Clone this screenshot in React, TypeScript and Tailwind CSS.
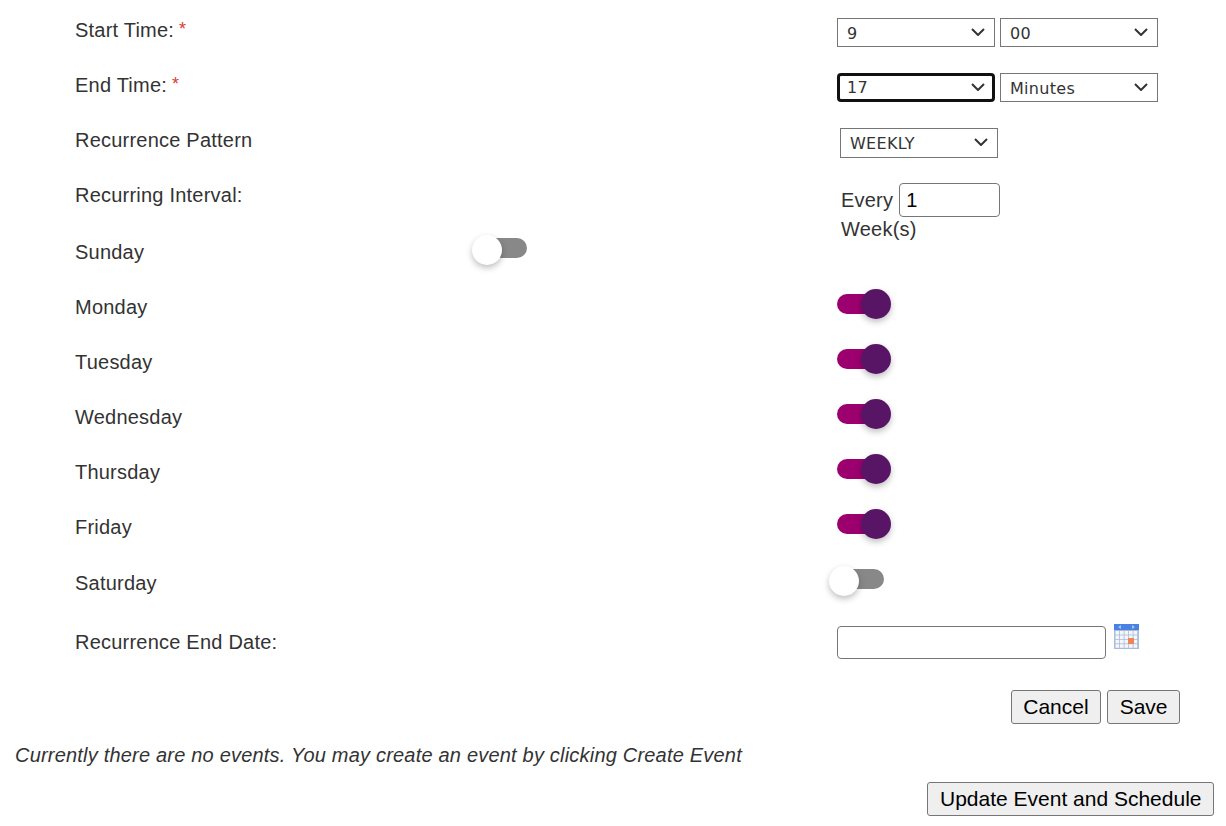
const days = ["Monday", "Tuesday", "Wednesday", "Thursday", "Friday"];

function Toggle({ on }: { on: boolean }) {
  if (on) {
    return (
      <div className="flex h-5 w-[50px] items-center justify-end rounded-full bg-[#9c006f]">
        <div className="-mr-1 h-[30px] w-[30px] shrink-0 rounded-full bg-[#581565] shadow-[0_3px_6px_rgba(0,0,0,0.25)]" />
      </div>
    );
  }
  return (
    <div className="flex h-5 w-[50px] items-center rounded-full bg-[#888888]">
      <div className="-ml-[5px] mt-1 h-[30px] w-[30px] shrink-0 rounded-full bg-white shadow-[0_3px_6px_rgba(0,0,0,0.25)]" />
    </div>
  );
}

function Required() {
  return <span className="ml-[5px] align-[2px] text-[18px] text-[#d8402f]">*</span>;
}

function Select({ value, options, focus, tall }: { value: string; options: string[]; focus?: boolean; tall?: boolean }) {
  return (
    <div className={tall ? "relative h-[30px] w-[158px]" : "relative h-[29px] w-[158px]"}>
      <select
        defaultValue={value}
        className={
          focus
            ? "h-full w-full appearance-none rounded-[4px] border-[3px] border-[#111111] pl-[7px] font-['DejaVu_Sans',sans-serif] text-[16px] tracking-[0.3px] text-[#333333]"
            : "h-full w-full appearance-none border border-[#767676] pt-[2px] pl-[9px] font-['DejaVu_Sans',sans-serif] text-[16px] tracking-[0.3px] text-[#333333]"
        }
      >
        {options.map((o) => (
          <option key={o}>{o}</option>
        ))}
      </select>
      <svg width="14" height="8" viewBox="0 0 14 8" className="pointer-events-none absolute top-[10px] right-[10px]">
        <path d="M1 1 7 7 13 1" fill="none" stroke="#333333" strokeWidth="2" />
      </svg>
    </div>
  );
}

function CalendarIcon() {
  const cells = [];
  for (let r = 0; r < 4; r++) {
    for (let c = 0; c < 5; c++) {
      cells.push(
        <rect key={`${r}-${c}`} x={1.5 + c * 4.5} y={7 + r * 4.4} width={3.7} height={3.6} fill="#f4f6fa" />
      );
    }
  }
  return (
    <svg width="25" height="25" viewBox="0 0 25 25" className="mt-[-5px] ml-2 shrink-0">
      <rect x="0" y="0" width="25" height="25" fill="#a9bdd8" />
      <rect x="0" y="0" width="25" height="6" fill="#4a82e4" />
      <path d="M7 1 4 3 7 5z M18 1 21 3 18 5z" fill="#a8c6f4" />
      {cells}
      <rect x="14" y="14" width="6" height="6" fill="#ee8458" />
    </svg>
  );
}

function Button({ children }: { children: string }) {
  return (
    <button className="h-[34px] rounded-[3px] border border-[#767676] bg-[#efefef] px-[11.5px] text-[21px] tracking-normal text-black">
      {children}
    </button>
  );
}

export default function App() {
  return (
    <div className="h-[826px] w-[1226px] overflow-hidden bg-white pt-[18px] font-['Liberation_Sans',Arial,sans-serif] text-[20px] leading-6 tracking-[0.22px] text-[#333333]">
      <div className="flex h-[55px] pl-[75px]">
        <div className="-mt-[1px] w-[762px]">
          Start Time:<Required />
        </div>
        <div className="flex gap-[5px]">
          <Select value="9" options={["9", "10"]} />
          <Select value="00" options={["00", "15", "30", "45"]} />
        </div>
      </div>
      <div className="flex h-[55px] pl-[75px]">
        <div className="-mt-[1px] w-[762px]">
          End Time:<Required />
        </div>
        <div className="flex gap-[5px]">
          <Select value="17" options={["17", "18"]} focus />
          <Select value="Minutes" options={["Minutes", "00"]} />
        </div>
      </div>
      <div className="flex h-[55px] pl-[75px]">
        <div className="w-[765px]">Recurrence Pattern</div>
        <Select value="WEEKLY" options={["WEEKLY", "DAILY"]} tall />
      </div>
      <div className="flex h-[57px] pl-[75px]">
        <div className="w-[766px]">Recurring Interval:</div>
        <div className="w-[170px] leading-[29px]">
          <div className="flex items-center gap-[6px]">
            <span className="pt-[1px]">Every</span>
            <input
              defaultValue="1"
              className="h-[34px] w-[101px] rounded-[4px] border border-[#767676] px-[6px] text-black"
            />
          </div>
          <div className="-mt-[2px]">Week(s)</div>
        </div>
      </div>
      <div className="flex h-[55px] pl-[75px]">
        <div className="w-[402px]">Sunday</div>
        <div className="-mt-[2px]">
          <Toggle on={false} />
        </div>
      </div>
      {days.map((d) => (
        <div key={d} className="flex h-[55px] pl-[75px]">
          <div className="w-[762px]">{d}</div>
          <div className="-mt-[1px]">
            <Toggle on />
          </div>
        </div>
      ))}
      <div className="flex h-[59px] pl-[75px] pt-[1px]">
        <div className="w-[759px]">Saturday</div>
        <div className="-mt-[2px]">
          <Toggle on={false} />
        </div>
      </div>
      <div className="flex h-[61px] pl-[75px]">
        <div className="w-[762px] pt-[1px]">Recurrence End Date:</div>
        <input className="-mt-[3px] h-[33px] w-[269px] rounded-[4px] border border-[#767676] px-2" />
        <CalendarIcon />
      </div>
      <div className="flex justify-end gap-[6px] pr-[46px]">
        <Button>Cancel</Button>
        <Button>Save</Button>
      </div>
      <div className="mt-[19px] pl-[15px] tracking-[0.2px] italic">
        Currently there are no events. You may create an event by clicking Create Event
      </div>
      <div className="mt-[15px] flex justify-end pr-3">
        <Button>Update Event and Schedule</Button>
      </div>
    </div>
  );
}
